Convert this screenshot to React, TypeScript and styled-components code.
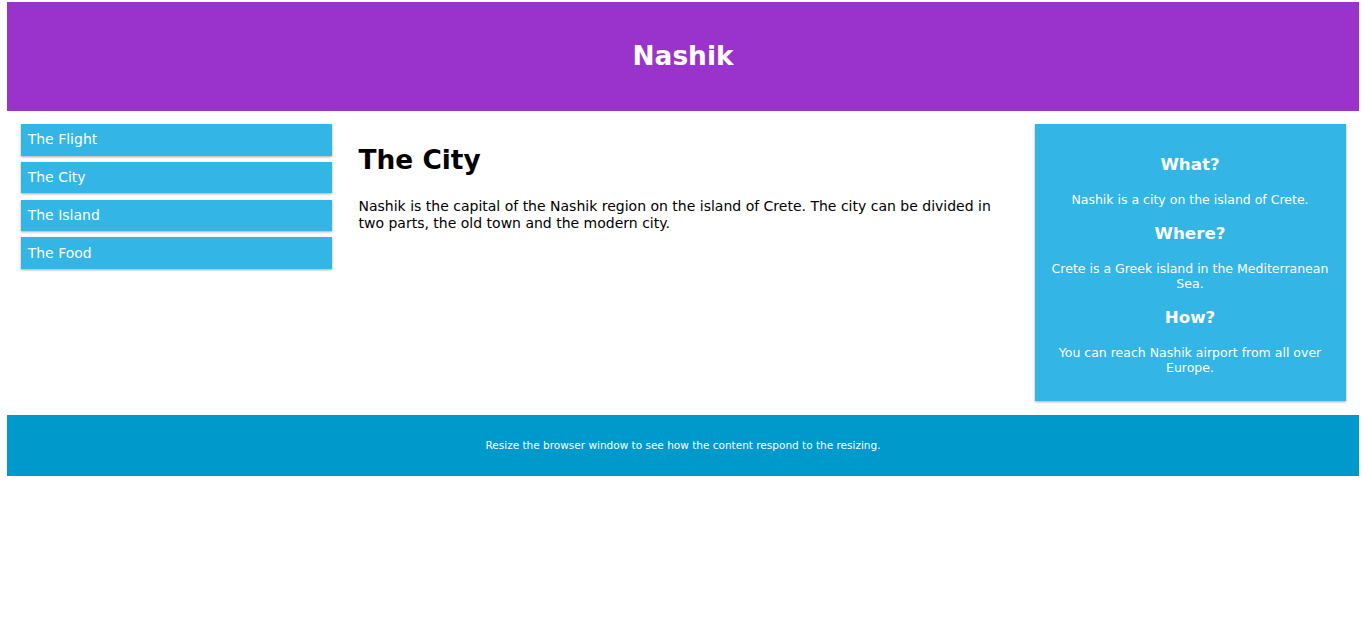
import styled, { createGlobalStyle } from "styled-components";

const GlobalStyle = createGlobalStyle`
  * {
    box-sizing: border-box;
  }
  body {
    margin: 2px 5px 0 7px;
    font-family: "DejaVu Sans", sans-serif;
    background: #ffffff;
  }
`;

const Header = styled.header`
  background-color: #9933cc;
  color: #ffffff;
  height: 109px;
  display: flex;
  align-items: center;
  justify-content: center;
  padding-bottom: 1px;
`;

const Title = styled.h1`
  margin: 0;
  font-size: 26.4px;
  line-height: 1;
  font-weight: bold;
`;

const Row = styled.div`
  display: flex;
  align-items: flex-start;
`;

const Col = styled.div<{ $span: number }>`
  width: ${(p) => (p.$span / 12) * 100}%;
  padding: 13px 13.5px 13.5px;
`;

const Menu = styled.ul`
  list-style: none;
  margin: 0;
  padding: 0;
`;

const MenuItem = styled.li`
  padding: 7.2px;
  margin-bottom: 6.3px;
  height: 31.5px;
  line-height: 17.1px;
  font-size: 14px;
  background-color: #33b5e5;
  color: #ffffff;
  box-shadow: 0 1px 3px rgba(0, 0, 0, 0.12), 0 1px 2px rgba(0, 0, 0, 0.24);
`;

const Heading = styled.h1`
  margin: 19.3px 0 0;
  font-size: 26.4px;
  line-height: 33px;
  font-weight: bold;
  color: #000000;
`;

const Text = styled.p`
  margin: 22px 0 0;
  font-size: 14px;
  line-height: 16.5px;
  color: #000000;
`;

const Aside = styled.div`
  background-color: #33b5e5;
  color: #ffffff;
  text-align: center;
  padding: 13.5px;
  box-shadow: 0 1px 3px rgba(0, 0, 0, 0.12), 0 1px 2px rgba(0, 0, 0, 0.24);
`;

const AsideTitle = styled.h2`
  margin: 15.3px 0;
  font-size: 16.7px;
  line-height: 23.6px;
  font-weight: bold;
`;

const AsideText = styled.p`
  margin: 12.6px 0;
  font-size: 12.5px;
  line-height: 15px;
`;

const Footer = styled.footer`
  background-color: #0099cc;
  color: #ffffff;
  text-align: center;
  padding: 13.5px;
`;

const FooterText = styled.p`
  margin: 10.8px 0;
  font-size: 10.5px;
  line-height: 12.6px;
`;

const menuItems = ["The Flight", "The City", "The Island", "The Food"];

const facts = [
  { q: "What?", a: "Nashik is a city on the island of Crete." },
  { q: "Where?", a: "Crete is a Greek island in the Mediterranean Sea." },
  { q: "How?", a: "You can reach Nashik airport from all over Europe." },
];

const App = () => (
  <>
    <GlobalStyle />
    <Header>
      <Title>Nashik</Title>
    </Header>
    <Row>
      <Col $span={3}>
        <Menu>
          {menuItems.map((item) => (
            <MenuItem key={item}>{item}</MenuItem>
          ))}
        </Menu>
      </Col>
      <Col $span={6}>
        <Heading>The City</Heading>
        <Text>
          Nashik is the capital of the Nashik region on the island of Crete. The city can be
          divided in two parts, the old town and the modern city.
        </Text>
      </Col>
      <Col $span={3}>
        <Aside>
          {facts.map((f) => (
            <div key={f.q}>
              <AsideTitle>{f.q}</AsideTitle>
              <AsideText>{f.a}</AsideText>
            </div>
          ))}
        </Aside>
      </Col>
    </Row>
    <Footer>
      <FooterText>Resize the browser window to see how the content respond to the resizing.</FooterText>
    </Footer>
  </>
);

export default App;
